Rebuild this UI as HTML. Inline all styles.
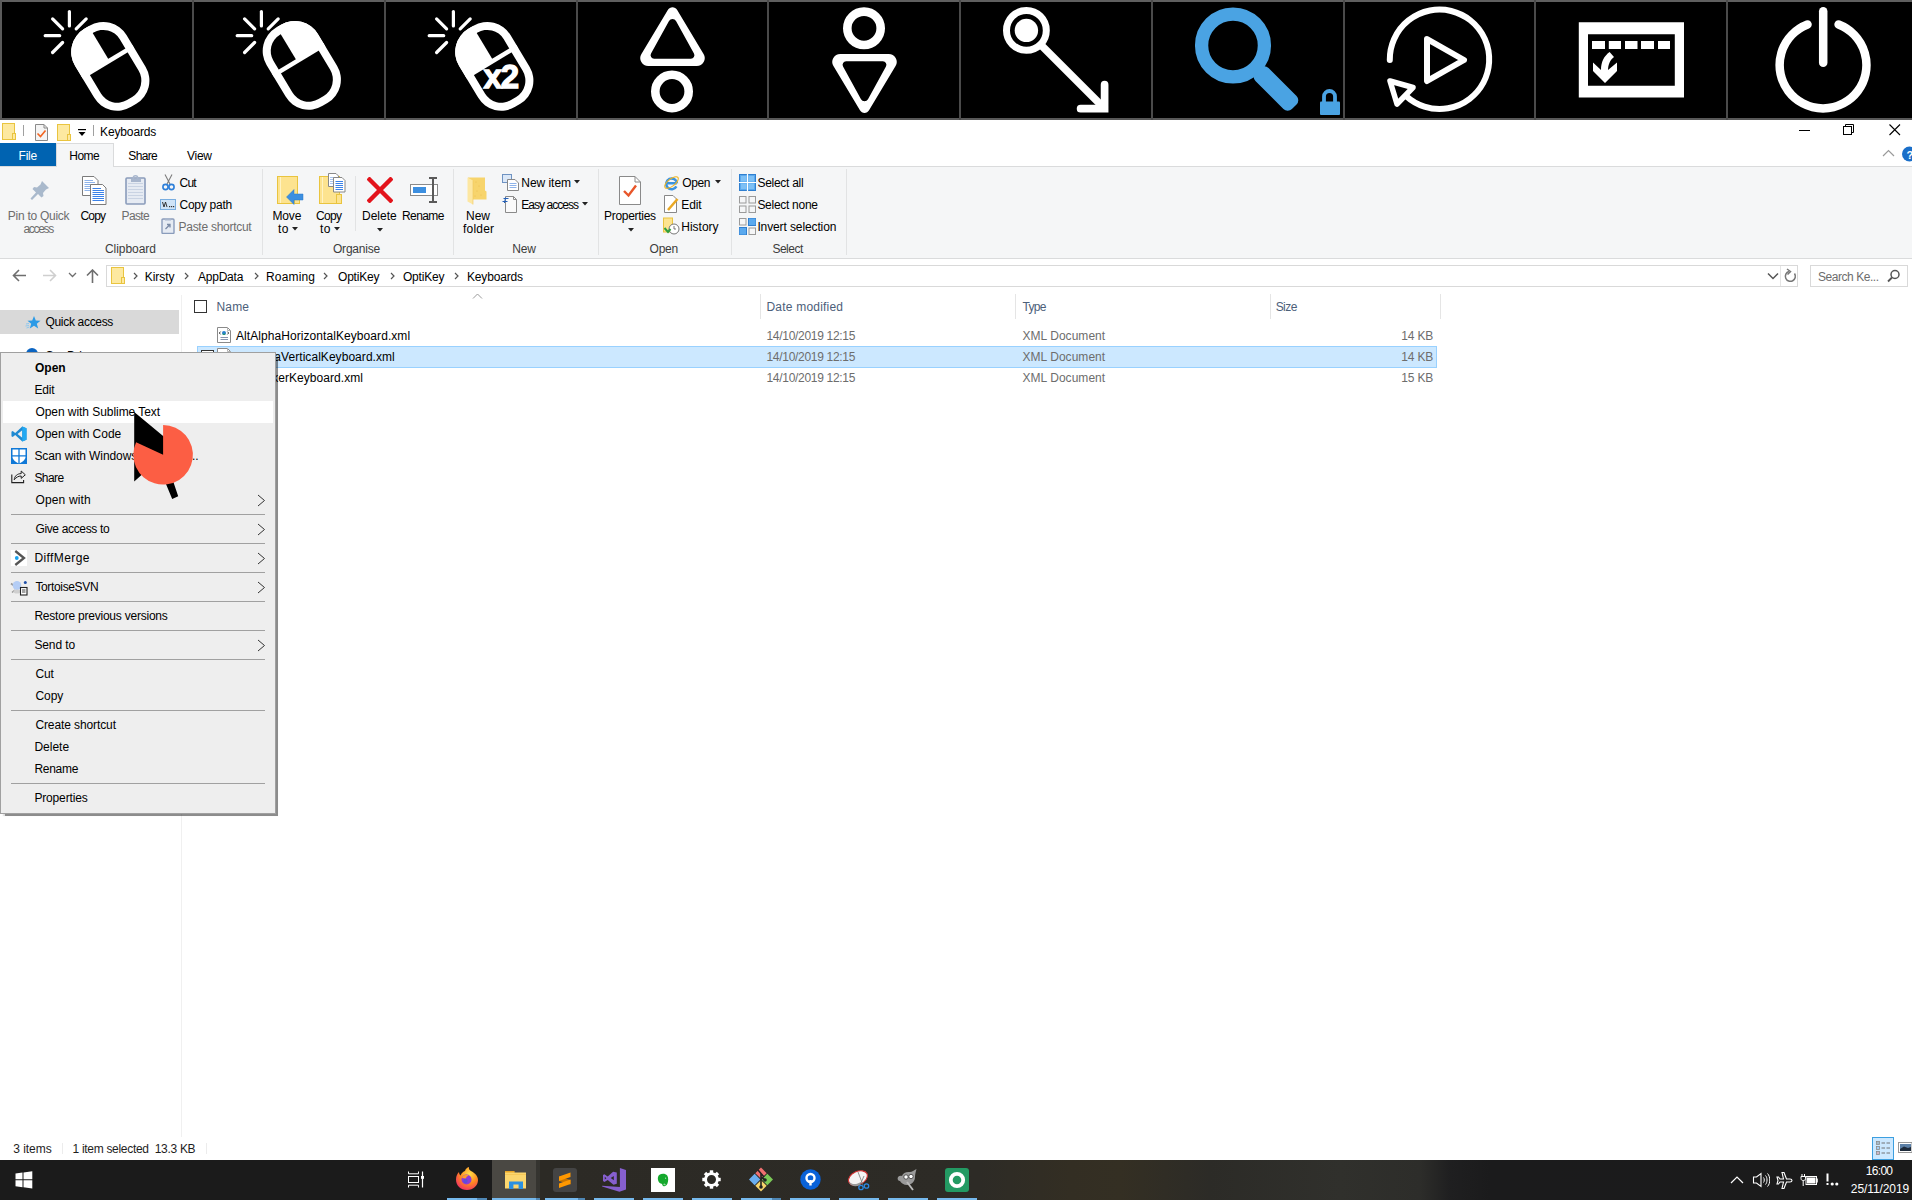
<!DOCTYPE html>
<html><head><meta charset="utf-8"><style>
*{margin:0;padding:0;box-sizing:border-box}
html,body{width:1912px;height:1200px;overflow:hidden;background:#fff;font-family:"Liberation Sans",sans-serif;font-size:12px;color:#000}
.a{position:absolute}
.t{position:absolute;white-space:nowrap;line-height:14px;letter-spacing:-0.15px}
#kb{position:absolute;left:0;top:0;width:1912px;height:120px;background:#000}
.sep{position:absolute;top:0;width:2px;height:120px;background:#4a4a4a}
</style></head><body>
<!-- OptiKey toolbar -->
<div id="kb">
 <div class="a" style="left:0;top:0;width:1912px;height:2px;background:#5f5f5f"></div>
 <div class="a" style="left:0;top:0;width:2px;height:120px;background:#5a5a5a"></div>
 <div class="a" style="left:0;top:118px;width:1912px;height:2px;background:#585858"></div>
 <div class="sep" style="left:192px"></div>
 <div class="sep" style="left:384px"></div>
 <div class="sep" style="left:576px"></div>
 <div class="sep" style="left:767px"></div>
 <div class="sep" style="left:959px"></div>
 <div class="sep" style="left:1151px"></div>
 <div class="sep" style="left:1343px"></div>
 <div class="sep" style="left:1534px"></div>
 <div class="sep" style="left:1726px"></div>
 <svg class="a" style="left:0;top:0" width="1912" height="120" viewBox="0 0 1912 120">
  <defs>
   <g id="rays" stroke="#fff" stroke-width="3.2" stroke-linecap="round">
    <line x1="69.4" y1="11.5" x2="69.4" y2="26"/>
    <line x1="45.2" y1="35.7" x2="59.7" y2="35.7"/>
    <line x1="52.6" y1="18.9" x2="62.6" y2="28.9"/>
    <line x1="86.2" y1="18.9" x2="76.2" y2="28.9"/>
    <line x1="62.6" y1="42.5" x2="52.6" y2="52.5"/>
   </g>
   <clipPath id="inner"><rect x="-30" y="-45.5" width="60" height="91" rx="27"/></clipPath>
  </defs>
  <!-- key 1: left click -->
  <use href="#rays"/>
  <g transform="translate(110.3,66.3) rotate(-31)">
   <rect x="-30" y="-45.5" width="60" height="91" rx="27" fill="#fff"/>
   <rect x="-22" y="-37.5" width="44" height="75" rx="19" fill="#000"/>
   <g clip-path="url(#inner)" fill="#fff">
    <rect x="-30" y="-46" width="32" height="42"/>
    <rect x="-30" y="-7.5" width="60" height="4.5"/>
   </g>
  </g>
  <!-- key 2: right click -->
  <g transform="translate(192,0)">
   <use href="#rays"/>
   <g transform="translate(109.8,65.3) rotate(-31)">
    <rect x="-30" y="-45.5" width="60" height="91" rx="27" fill="#fff"/>
    <rect x="-22" y="-37.5" width="44" height="75" rx="19" fill="#000"/>
    <g clip-path="url(#inner)" fill="#fff">
     <rect x="-2" y="-46" width="32" height="41"/>
     <rect x="-30" y="-8.3" width="60" height="4.5"/>
    </g>
   </g>
  </g>
  <!-- key 3: double click -->
  <g transform="translate(384,0)">
   <use href="#rays"/>
   <g transform="translate(110.3,66.3) rotate(-31)">
    <rect x="-30" y="-45.5" width="60" height="91" rx="27" fill="#fff"/>
    <rect x="-22" y="-37.5" width="44" height="75" rx="19" fill="#000"/>
    <g clip-path="url(#inner)" fill="#fff">
     <rect x="-30" y="-46" width="32" height="42"/>
     <rect x="-30" y="-7.5" width="60" height="4.5"/>
    </g>
   </g>
   <text x="99.5" y="88" font-family="Liberation Sans" font-weight="bold" font-size="33" fill="#fff" stroke="#fff" stroke-width="1.3" letter-spacing="-1.2">x2</text>
  </g>
  <!-- key 4 -->
  <path id="tri4" d="M667.96,9.77 L641.43,53.98 A8,8 0 0 0 648.29,66.10 L696.71,66.10 A8,8 0 0 0 703.57,53.98 L677.04,9.77 A5.3,5.3 0 0 0 667.96,9.77 Z M669.00,20.97 L651.04,53.61 A3.5,3.5 0 0 0 654.11,58.80 L690.89,58.80 A3.5,3.5 0 0 0 693.96,53.61 L676.00,20.97 A4,4 0 0 0 669.00,20.97 Z" fill="#fff" fill-rule="evenodd"/>
  <circle cx="672" cy="91.5" r="16.7" fill="none" stroke="#fff" stroke-width="8.6"/>
  <!-- key 5 -->
  <circle cx="864" cy="28.3" r="16.7" fill="none" stroke="#fff" stroke-width="8.6"/>
  <path d="M667.96,9.77 L641.43,53.98 A8,8 0 0 0 648.29,66.10 L696.71,66.10 A8,8 0 0 0 703.57,53.98 L677.04,9.77 A5.3,5.3 0 0 0 667.96,9.77 Z M669.00,20.97 L651.04,53.61 A3.5,3.5 0 0 0 654.11,58.80 L690.89,58.80 A3.5,3.5 0 0 0 693.96,53.61 L676.00,20.97 A4,4 0 0 0 669.00,20.97 Z" fill="#fff" fill-rule="evenodd" transform="translate(192,120.1) scale(1,-1)"/>
  <!-- key 6 -->
  <circle cx="1026.4" cy="30.4" r="19.9" fill="none" stroke="#fff" stroke-width="7"/>
  <circle cx="1026.4" cy="30.4" r="11.7" fill="#fff"/>
  <line x1="1042" y1="46" x2="1103" y2="107" stroke="#fff" stroke-width="7.5"/>
  <path d="M1080.6,108.7 L1104.6,108.7 L1104.6,84.7" fill="none" stroke="#fff" stroke-width="7.7" stroke-linecap="round" stroke-linejoin="miter"/>
  <!-- key 7 magnifier -->
  <circle cx="1233" cy="45.5" r="31.4" fill="none" stroke="#4aa3e3" stroke-width="13.3"/>
  <rect x="35" y="-9.25" width="51.6" height="18.5" rx="6" fill="#4aa3e3" transform="translate(1233,45.5) rotate(45)"/>
  <path d="M1324,102 V96.5 a5.5,5.5 0 0 1 11,0 V102" fill="none" stroke="#4aa3e3" stroke-width="3.8"/>
  <rect x="1320" y="101.5" width="20" height="13.5" rx="1" fill="#4aa3e3"/>
  <!-- key 8 -->
  <path d="M1389.8,60 A49.7,49.7 0 1 1 1406,96" fill="none" stroke="#fff" stroke-width="6" stroke-linecap="round"/>
  <path d="M1390,81 L1413,87.5 L1397,104 Z" fill="none" stroke="#fff" stroke-width="5.5" stroke-linejoin="round"/>
  <path d="M1427,39 L1464,60 L1427,81 Z" fill="none" stroke="#fff" stroke-width="6" stroke-linejoin="round"/>
  <!-- key 9 -->
  <path d="M1578.8,22.3 H1684 V97.5 H1578.8 Z M1588,34.2 V85.8 H1674.8 V34.2 Z" fill="#fff" fill-rule="evenodd"/>
  <g fill="#fff">
   <rect x="1592" y="41" width="13" height="8"/>
   <rect x="1608.8" y="41" width="12.2" height="8"/>
   <rect x="1625" y="41" width="12.5" height="8"/>
   <rect x="1641" y="41" width="13" height="8"/>
   <rect x="1658" y="41" width="12" height="8"/>
   <path d="M1593,62.5 L1601,70 C1601,62 1604,56 1609.6,52 L1614,57 C1610,60 1608,65 1608,70 L1617,62.5 L1617,71 L1605,83 L1593,71 Z"/>
  </g>
  <!-- key 10 power -->
  <path d="M1807.5,24.5 A43.4,43.4 0 1 0 1838.6,24.5" fill="none" stroke="#fff" stroke-width="8.5" stroke-linecap="round"/>
  <line x1="1823.2" y1="11.2" x2="1823.2" y2="62.8" stroke="#fff" stroke-width="8.5" stroke-linecap="round"/>
 </svg>
</div>


<svg class="a" style="left:2px;top:123px;" width="14" height="17" viewBox="0 0 14 17"><rect x="0.5" y="0.5" width="12" height="16" fill="#fde9a0" stroke="#e9c43f"/><rect x="10.5" y="10.5" width="3" height="6" fill="#fde9a0" stroke="#e9c43f"/></svg>
<div class="a" style="left:23px;top:125px;width:1px;height:11px;background:#a0a0a0;"></div>
<svg class="a" style="left:35px;top:124px;" width="13" height="17" viewBox="0 0 13 17"><path d="M0.5,0.5 H9 L12.5,4 V16.5 H0.5 Z" fill="#f4f4f4" stroke="#8a8a8a"/><path d="M9,0.5 V4 H12.5" fill="none" stroke="#8a8a8a"/><path d="M2.5,9.5 L5.5,12.5 L10.5,6.5" fill="none" stroke="#f26522" stroke-width="1.6"/></svg>
<svg class="a" style="left:57px;top:124px;" width="14" height="17" viewBox="0 0 14 17"><rect x="0.5" y="0.5" width="12" height="16" fill="#fde9a0" stroke="#e9c43f"/><rect x="10.5" y="10.5" width="3" height="6" fill="#fde9a0" stroke="#e9c43f"/></svg>
<svg class="a" style="left:78px;top:129px;" width="8" height="8" viewBox="0 0 8 8"><rect x="0" y="0" width="8" height="1.2" fill="#000"/><path d="M0.5,3 H7.5 L4,7 Z" fill="#000"/></svg>
<div class="a" style="left:93px;top:125px;width:1px;height:11px;background:#a0a0a0;"></div>
<div class="t" style="left:100px;top:124.84px;letter-spacing:-0.125px;">Keyboards</div>
<div class="a" style="left:1799px;top:130px;width:11px;height:1px;background:#000;"></div>
<svg class="a" style="left:1843px;top:124px;" width="12" height="12" viewBox="0 0 12 12"><rect x="0.5" y="2.5" width="8" height="8" fill="none" stroke="#000"/><path d="M2.5,2.5 V0.5 H10.5 V8.5 H8.5" fill="none" stroke="#000"/></svg>
<svg class="a" style="left:1889px;top:124px;" width="12" height="12" viewBox="0 0 12 12"><path d="M0.5,0.5 L11,11 M11,0.5 L0.5,11" stroke="#000" stroke-width="1.1"/></svg>
<div class="a" style="left:0px;top:143px;width:56px;height:23px;background:#0063b1;"></div>
<div class="t" style="left:18.6px;top:148.84px;color:#fff;letter-spacing:-0.233px;">File</div>
<div class="a" style="left:56px;top:143px;width:58px;height:24px;background:#f5f6f7;border:1px solid #dadbdc;border-bottom:none;z-index:2"></div>
<div class="t" style="left:69.3px;top:148.84px;letter-spacing:-0.533px;z-index:3">Home</div>
<div class="t" style="left:128.3px;top:148.84px;letter-spacing:-0.650px;">Share</div>
<div class="t" style="left:187px;top:148.84px;letter-spacing:-0.267px;">View</div>
<svg class="a" style="left:1882px;top:149px;" width="13" height="8" viewBox="0 0 13 8"><path d="M1,7 L6.5,1.5 L12,7" fill="none" stroke="#9a9a9a" stroke-width="1.2"/></svg>
<svg class="a" style="left:1901px;top:146px;" width="11" height="16" viewBox="0 0 11 16"><circle cx="8.5" cy="8" r="7.5" fill="#1a6fc9"/><text x="5.5" y="12.5" font-family="Liberation Sans" font-weight="bold" font-size="11" fill="#fff">?</text></svg>
<div class="a" style="left:0px;top:166px;width:1912px;height:93px;background:#f5f6f7;border-top:1px solid #dadbdc;border-bottom:1px solid #dadbdc"></div>
<div class="a" style="left:262px;top:169px;width:1px;height:86px;background:#e2e3e4;"></div>
<div class="a" style="left:453px;top:169px;width:1px;height:86px;background:#e2e3e4;"></div>
<div class="a" style="left:598px;top:169px;width:1px;height:86px;background:#e2e3e4;"></div>
<div class="a" style="left:731px;top:169px;width:1px;height:86px;background:#e2e3e4;"></div>
<div class="a" style="left:846px;top:169px;width:1px;height:86px;background:#e2e3e4;"></div>
<div class="a" style="left:355px;top:176px;width:1px;height:55px;background:#e2e3e4;"></div>
<svg class="a" style="left:29px;top:180px;" width="21" height="21" viewBox="0 0 21 21"><path d="M13,1 L20,8 L17,9.5 L14,13 L14.5,16 L12.5,17.5 L9,14 L3,20 L1.5,18.5 L7,12.5 L3.5,9 L5,7 L8,7.5 L11.5,4.5 Z" fill="#a9b9cc"/></svg>
<div class="t" style="left:7.800000000000001px;top:208.84px;color:#6d6d6d;letter-spacing:-0.264px;">Pin to Quick</div>
<div class="t" style="left:23.4px;top:221.84px;color:#6d6d6d;letter-spacing:-1.280px;">access</div>
<svg class="a" style="left:82px;top:176px;" width="25" height="29" viewBox="0 0 25 29"><path d="M0.5,0.5 H12 L16,4.5 V19.5 H0.5 Z" fill="#fff" stroke="#7b7b7b"/><g stroke="#8fb4ea" stroke-width="1"><line x1="2.5" y1="4.5" x2="11" y2="4.5"/><line x1="2.5" y1="6.5" x2="13" y2="6.5"/><line x1="2.5" y1="8.5" x2="13" y2="8.5"/><line x1="2.5" y1="10.5" x2="13" y2="10.5"/><line x1="2.5" y1="12.5" x2="13" y2="12.5"/><line x1="2.5" y1="14.5" x2="13" y2="14.5"/></g><path d="M8.5,8.5 H20.5 L24,12 V28.5 H8.5 Z" fill="#fff" stroke="#7b7b7b"/><g stroke="#3b82e8" stroke-width="1"><line x1="10.5" y1="12.5" x2="19" y2="12.5"/><line x1="10.5" y1="14.5" x2="22" y2="14.5"/><line x1="10.5" y1="16.5" x2="22" y2="16.5"/><line x1="10.5" y1="18.5" x2="22" y2="18.5"/><line x1="10.5" y1="20.5" x2="22" y2="20.5"/><line x1="10.5" y1="22.5" x2="22" y2="22.5"/><line x1="10.5" y1="24.5" x2="22" y2="24.5"/></g></svg>
<div class="t" style="left:80.5px;top:208.84px;letter-spacing:-0.833px;">Copy</div>
<svg class="a" style="left:125px;top:175px;" width="22" height="30" viewBox="0 0 22 30"><rect x="1" y="3" width="19" height="26" rx="1" fill="#e6ebf3" stroke="#8a9cbb" stroke-width="1.6"/><g stroke="#c9d3e3"><line x1="3" y1="8.5" x2="18" y2="8.5"/><line x1="3" y1="11.5" x2="18" y2="11.5"/><line x1="3" y1="14.5" x2="18" y2="14.5"/><line x1="3" y1="17.5" x2="18" y2="17.5"/><line x1="3" y1="20.5" x2="18" y2="20.5"/><line x1="3" y1="23.5" x2="18" y2="23.5"/></g><rect x="6" y="4" width="10" height="3" fill="#a8b6cd"/><circle cx="10.5" cy="3" r="2.2" fill="none" stroke="#a8b6cd" stroke-width="1.5"/></svg>
<div class="t" style="left:121.6px;top:208.84px;color:#6d6d6d;letter-spacing:-0.650px;">Paste</div>
<svg class="a" style="left:162px;top:174px;" width="13" height="17" viewBox="0 0 13 17"><path d="M3,0.5 L8,10 M10,0.5 L5,10" stroke="#7d7d7d" stroke-width="1.1"/><circle cx="3.5" cy="13" r="2.6" fill="none" stroke="#2d7fd9" stroke-width="1.6"/><circle cx="9.5" cy="13" r="2.6" fill="none" stroke="#2d7fd9" stroke-width="1.6"/></svg>
<div class="t" style="left:179.5px;top:175.84px;letter-spacing:-0.750px;">Cut</div>
<svg class="a" style="left:160px;top:199px;" width="16" height="11" viewBox="0 0 16 11"><rect x="0.5" y="0.5" width="15" height="10" fill="#cfe3f7" stroke="#7aaee0"/><path d="M2.5,3 L4,8 L5.5,3 L7,8" fill="none" stroke="#222" stroke-width="0.9"/><g fill="#333"><rect x="9" y="7" width="1.2" height="1.2"/><rect x="11" y="7" width="1.2" height="1.2"/><rect x="13" y="7" width="1.2" height="1.2"/></g></svg>
<div class="t" style="left:179.5px;top:197.84px;letter-spacing:-0.250px;">Copy path</div>
<svg class="a" style="left:161px;top:217px;" width="14" height="17" viewBox="0 0 14 17"><rect x="1" y="2" width="12" height="14.5" rx="1" fill="#e6ebf3" stroke="#8a9cbb" stroke-width="1.4"/><rect x="4" y="1" width="6" height="2.5" fill="#a8b6cd"/><path d="M4.5,12 L9,7.5 M6,7.5 H9 V10.5" fill="none" stroke="#7a8aa5" stroke-width="1.3"/></svg>
<div class="t" style="left:178.5px;top:219.84px;color:#6d6d6d;letter-spacing:-0.269px;">Paste shortcut</div>
<div class="t" style="left:105px;top:241.84px;color:#3c3c3c;letter-spacing:-0.050px;">Clipboard</div>
<svg class="a" style="left:277px;top:176px;" width="24" height="29" viewBox="0 0 24 29"><rect x="0.5" y="0.5" width="20" height="27" fill="#fde38f" stroke="#e9c43f"/><line x1="3.5" y1="1" x2="3.5" y2="27" stroke="#fff3c4"/><rect x="17.5" y="18.5" width="5" height="9" fill="#fde38f" stroke="#e9c43f"/></svg>
<svg class="a" style="left:286px;top:189px;" width="18" height="17" viewBox="0 0 18 17"><path d="M0.5,8 L8,0.5 V5 H17 V11 H8 V15.5 Z" fill="#3c8fe0" stroke="#2a78c9" stroke-width="0.5"/></svg>
<div class="t" style="left:272.5px;top:208.84px;letter-spacing:-0.167px;">Move</div>
<div class="t" style="left:278px;top:221.84px;letter-spacing:0.500px;">to</div>
<svg class="a" style="left:292px;top:227px;" width="6" height="4" viewBox="0 0 6 4"><path d="M0,0 H6 L3,3.5 Z" fill="#222"/></svg>
<svg class="a" style="left:319px;top:176px;" width="24" height="29" viewBox="0 0 24 29"><rect x="0.5" y="0.5" width="20" height="27" fill="#fde38f" stroke="#e9c43f"/><line x1="3.5" y1="1" x2="3.5" y2="27" stroke="#fff3c4"/><rect x="17.5" y="18.5" width="5" height="9" fill="#fde38f" stroke="#e9c43f"/></svg>
<svg class="a" style="left:328px;top:173px;" width="18" height="20" viewBox="0 0 18 20"><path d="M0.5,0.5 H8 L10.5,3 V13.5 H0.5 Z" fill="#fff" stroke="#888"/><g stroke="#a9c5ef"><line x1="2" y1="4.5" x2="9" y2="4.5"/><line x1="2" y1="6.5" x2="9" y2="6.5"/><line x1="2" y1="8.5" x2="9" y2="8.5"/><line x1="2" y1="10.5" x2="9" y2="10.5"/></g><path d="M5.5,4.5 H14 L17,7.5 V19 H5.5 Z" fill="#fff" stroke="#888"/><g stroke="#3b82e8"><line x1="7.5" y1="8.5" x2="15" y2="8.5"/><line x1="7.5" y1="10.5" x2="15" y2="10.5"/><line x1="7.5" y1="12.5" x2="15" y2="12.5"/><line x1="7.5" y1="14.5" x2="15" y2="14.5"/><line x1="7.5" y1="16.5" x2="15" y2="16.5"/></g></svg>
<div class="t" style="left:316px;top:208.84px;letter-spacing:-0.667px;">Copy</div>
<div class="t" style="left:320px;top:221.84px;letter-spacing:0.500px;">to</div>
<svg class="a" style="left:334px;top:227px;" width="6" height="4" viewBox="0 0 6 4"><path d="M0,0 H6 L3,3.5 Z" fill="#222"/></svg>
<svg class="a" style="left:367px;top:177px;" width="26" height="26" viewBox="0 0 26 26"><path d="M2.5,2.5 L23.5,23.5 M23.5,2.5 L2.5,23.5" stroke="#e3131b" stroke-width="4.4" stroke-linecap="square"/></svg>
<div class="t" style="left:362px;top:208.84px;letter-spacing:0.000px;">Delete</div>
<svg class="a" style="left:377px;top:228px;" width="6" height="4" viewBox="0 0 6 4"><path d="M0,0 H6 L3,3.5 Z" fill="#222"/></svg>
<svg class="a" style="left:410px;top:177px;" width="29" height="27" viewBox="0 0 29 27"><rect x="0.5" y="7.5" width="27" height="11" fill="#fff" stroke="#8a8a8a"/><rect x="3" y="10" width="13" height="6" fill="#3c8fe0"/><path d="M19,1 H27 M23,1 V25 M19,25 H27" fill="none" stroke="#5a5a5a" stroke-width="2"/></svg>
<div class="t" style="left:402px;top:208.84px;letter-spacing:-0.600px;">Rename</div>
<div class="t" style="left:333px;top:241.84px;color:#3c3c3c;letter-spacing:-0.214px;">Organise</div>
<svg class="a" style="left:467px;top:177px;" width="21" height="29" viewBox="0 0 21 29"><path d="M1,0.5 H18 V13.5 L19.5,14.5 V22.5 H1 Z" fill="#f7d46c"/><g fill="#e9b94a"><circle cx="9" cy="5" r="0.5"/><circle cx="12" cy="9" r="0.5"/><circle cx="10" cy="14" r="0.5"/><circle cx="14" cy="18" r="0.5"/><circle cx="8" cy="19" r="0.5"/></g><path d="M0.5,0.5 L6,3.5 V27.5 L0.5,24.5 Z" fill="#fde7a2"/><path d="M6,3.5 V27.5" stroke="#f0c85a" stroke-width="0.6"/></svg>
<div class="t" style="left:466px;top:208.84px;letter-spacing:0.000px;">New</div>
<div class="t" style="left:463px;top:221.84px;letter-spacing:0.200px;">folder</div>
<svg class="a" style="left:502px;top:174px;" width="18" height="17" viewBox="0 0 18 17"><rect x="0.5" y="0.5" width="9" height="8" fill="#dbe8f8" stroke="#6f93c2"/><path d="M5.5,5.5 H13 L16.5,9 V16.5 H5.5 Z" fill="#fff" stroke="#888"/><g stroke="#8fb4ea"><line x1="7.5" y1="9.5" x2="14.5" y2="9.5"/><line x1="7.5" y1="11.5" x2="14.5" y2="11.5"/><line x1="7.5" y1="13.5" x2="14.5" y2="13.5"/></g></svg>
<div class="t" style="left:521.3px;top:175.84px;letter-spacing:-0.043px;">New item</div>
<svg class="a" style="left:574px;top:180px;" width="6" height="4" viewBox="0 0 6 4"><path d="M0,0 H6 L3,3.5 Z" fill="#222"/></svg>
<svg class="a" style="left:502px;top:195px;" width="17" height="18" viewBox="0 0 17 18"><path d="M3.5,1.5 H11.5 L14.5,4.5 V17.5 H3.5 Z" fill="#fafafa" stroke="#8a8a8a"/><path d="M11.5,1.5 V4.5 H14.5" fill="none" stroke="#8a8a8a"/><path d="M1.5,3.5 H6.5 M0.5,6.5 H5.5" stroke="#2460b8" stroke-width="1.1"/><path d="M3.6,2.5 L2.4,8" stroke="#2460b8" stroke-width="1"/></svg>
<div class="t" style="left:521.3px;top:197.84px;letter-spacing:-0.970px;">Easy access</div>
<svg class="a" style="left:582px;top:202px;" width="6" height="4" viewBox="0 0 6 4"><path d="M0,0 H6 L3,3.5 Z" fill="#222"/></svg>
<div class="t" style="left:512.3px;top:241.84px;color:#3c3c3c;letter-spacing:-0.150px;">New</div>
<svg class="a" style="left:619px;top:176px;" width="23" height="29" viewBox="0 0 23 29"><path d="M0.5,0.5 H16 L21.5,6 V28.5 H0.5 Z" fill="#fff" stroke="#8a8a8a"/><path d="M16,0.5 V6 H21.5" fill="none" stroke="#8a8a8a"/><path d="M5,15 L9.5,19.5 L17,9.5" fill="none" stroke="#e8562a" stroke-width="2.4"/></svg>
<div class="t" style="left:604px;top:208.84px;letter-spacing:-0.289px;">Properties</div>
<svg class="a" style="left:628px;top:228px;" width="6" height="4" viewBox="0 0 6 4"><path d="M0,0 H6 L3,3.5 Z" fill="#222"/></svg>
<svg class="a" style="left:663px;top:174px;" width="17" height="17" viewBox="0 0 17 17"><path d="M13.8,9.3 H3.6 M13.4,12.4 A5.4,5.4 0 1 1 14,9.3" fill="none" stroke="#3a93e0" stroke-width="2.5"/><ellipse cx="8.5" cy="8.5" rx="8.2" ry="3.6" transform="rotate(-38 8.5 8.5)" fill="none" stroke="#f2b51c" stroke-width="1.1"/></svg>
<div class="t" style="left:682.3px;top:175.84px;letter-spacing:-0.433px;">Open</div>
<svg class="a" style="left:715px;top:180px;" width="6" height="4" viewBox="0 0 6 4"><path d="M0,0 H6 L3,3.5 Z" fill="#222"/></svg>
<svg class="a" style="left:664px;top:195px;" width="15" height="18" viewBox="0 0 15 18"><path d="M0.5,0.5 H9 L12.5,4 V17.5 H0.5 Z" fill="#fff" stroke="#888"/><path d="M4,15 L13.5,4" stroke="#e9a824" stroke-width="2.5"/></svg>
<div class="t" style="left:681.3px;top:197.84px;letter-spacing:-0.133px;">Edit</div>
<svg class="a" style="left:663px;top:217px;" width="17" height="18" viewBox="0 0 17 18"><rect x="0.5" y="1" width="9" height="14" fill="#fde38f" stroke="#e9c43f"/><circle cx="11" cy="12" r="5" fill="#fff" stroke="#777"/><path d="M11,9 V12 H13" fill="none" stroke="#555" stroke-width="0.8"/><path d="M1.5,11 L5,15 L7.5,12" fill="none" stroke="#2f9e3c" stroke-width="2"/></svg>
<div class="t" style="left:681.3px;top:219.84px;letter-spacing:-0.017px;">History</div>
<div class="t" style="left:649.6px;top:241.84px;color:#3c3c3c;letter-spacing:-0.267px;">Open</div>
<svg class="a" style="left:739px;top:174px;" width="17" height="17" viewBox="0 0 17 17"><rect x="0.5" y="0.5" width="16" height="16" fill="#5aa9ee" stroke="#2f7fd0"/><path d="M8.5,0 V17 M0,8.5 H17" stroke="#fff" stroke-width="1.2"/><rect x="2" y="2" width="5.5" height="5.5" fill="#7ec0f5"/><rect x="9.5" y="2" width="5.5" height="5.5" fill="#7ec0f5"/><rect x="2" y="9.5" width="5.5" height="5.5" fill="#7ec0f5"/><rect x="9.5" y="9.5" width="5.5" height="5.5" fill="#7ec0f5"/></svg>
<div class="t" style="left:757.4px;top:175.84px;letter-spacing:-0.267px;">Select all</div>
<svg class="a" style="left:739px;top:196px;" width="17" height="17" viewBox="0 0 17 17"><g fill="none" stroke="#9a9a9a"><rect x="0.5" y="0.5" width="6.5" height="6.5"/><rect x="10" y="0.5" width="6.5" height="6.5"/><rect x="0.5" y="10" width="6.5" height="6.5"/><rect x="10" y="10" width="6.5" height="6.5"/></g></svg>
<div class="t" style="left:757.4px;top:197.84px;letter-spacing:-0.280px;">Select none</div>
<svg class="a" style="left:739px;top:218px;" width="17" height="17" viewBox="0 0 17 17"><g fill="none" stroke="#9a9a9a"><rect x="0.5" y="0.5" width="6.5" height="6.5"/><rect x="10" y="10" width="6.5" height="6.5"/></g><rect x="9.5" y="0" width="7.5" height="7.5" fill="#5aa9ee" stroke="#2f7fd0"/><rect x="0" y="9.5" width="7.5" height="7.5" fill="#5aa9ee" stroke="#2f7fd0"/></svg>
<div class="t" style="left:757.4px;top:219.84px;letter-spacing:-0.113px;">Invert selection</div>
<div class="t" style="left:772.4px;top:241.84px;color:#3c3c3c;letter-spacing:-0.480px;">Select</div>
<svg class="a" style="left:12px;top:269px;" width="15" height="14" viewBox="0 0 15 14"><path d="M7,1 L1.5,6.5 L7,12 M1.5,6.5 H14" fill="none" stroke="#6e6e6e" stroke-width="1.6"/></svg>
<svg class="a" style="left:42px;top:269px;" width="15" height="14" viewBox="0 0 15 14"><path d="M8,1 L13.5,6.5 L8,12 M13.5,6.5 H1" fill="none" stroke="#cfcfcf" stroke-width="1.6"/></svg>
<svg class="a" style="left:68px;top:272px;" width="9" height="6" viewBox="0 0 9 6"><path d="M1,1 L4.5,4.5 L8,1" fill="none" stroke="#6e6e6e" stroke-width="1.3"/></svg>
<svg class="a" style="left:86px;top:269px;" width="13" height="14" viewBox="0 0 13 14"><path d="M1,6.5 L6.5,1 L12,6.5 M6.5,1 V14" fill="none" stroke="#6e6e6e" stroke-width="1.6"/></svg>
<div class="a" style="left:106px;top:265px;width:1692px;height:22px;border:1px solid #d9d9d9;background:#fff"></div>
<div class="a" style="left:1780px;top:266px;width:1px;height:20px;background:#e5e5e5;"></div>
<svg class="a" style="left:111px;top:267px;" width="14" height="17" viewBox="0 0 14 17"><rect x="0.5" y="0.5" width="12" height="16" fill="#fde9a0" stroke="#e9c43f"/><rect x="10.5" y="10.5" width="3" height="6" fill="#fde9a0" stroke="#e9c43f"/></svg>
<svg class="a" style="left:133px;top:272px;" width="5" height="8" viewBox="0 0 5 8"><path d="M1,1 L4,4 L1,7" fill="none" stroke="#555" stroke-width="1.2"/></svg>
<svg class="a" style="left:184px;top:272px;" width="5" height="8" viewBox="0 0 5 8"><path d="M1,1 L4,4 L1,7" fill="none" stroke="#555" stroke-width="1.2"/></svg>
<svg class="a" style="left:254px;top:272px;" width="5" height="8" viewBox="0 0 5 8"><path d="M1,1 L4,4 L1,7" fill="none" stroke="#555" stroke-width="1.2"/></svg>
<svg class="a" style="left:323px;top:272px;" width="5" height="8" viewBox="0 0 5 8"><path d="M1,1 L4,4 L1,7" fill="none" stroke="#555" stroke-width="1.2"/></svg>
<svg class="a" style="left:390px;top:272px;" width="5" height="8" viewBox="0 0 5 8"><path d="M1,1 L4,4 L1,7" fill="none" stroke="#555" stroke-width="1.2"/></svg>
<svg class="a" style="left:454px;top:272px;" width="5" height="8" viewBox="0 0 5 8"><path d="M1,1 L4,4 L1,7" fill="none" stroke="#555" stroke-width="1.2"/></svg>
<div class="t" style="left:144.7px;top:269.84px;letter-spacing:-0.020px;">Kirsty</div>
<div class="t" style="left:198px;top:269.84px;letter-spacing:-0.233px;">AppData</div>
<div class="t" style="left:266px;top:269.84px;letter-spacing:0.167px;">Roaming</div>
<div class="t" style="left:338px;top:269.84px;letter-spacing:-0.200px;">OptiKey</div>
<div class="t" style="left:403px;top:269.84px;letter-spacing:-0.217px;">OptiKey</div>
<div class="t" style="left:467px;top:269.84px;letter-spacing:-0.162px;">Keyboards</div>
<svg class="a" style="left:1767px;top:272px;" width="12" height="8" viewBox="0 0 12 8"><path d="M1,1.5 L6,6.5 L11,1.5" fill="none" stroke="#555" stroke-width="1.5"/></svg>
<svg class="a" style="left:1784px;top:268px;" width="13" height="16" viewBox="0 0 13 16"><path d="M10.5,5.5 A5,5 0 1 1 5,3.5" fill="none" stroke="#777" stroke-width="1.5"/><path d="M3,1 L6.5,3.5 L3.5,6.5" fill="none" stroke="#777" stroke-width="1.5"/></svg>
<div class="a" style="left:1810px;top:265px;width:98px;height:22px;border:1px solid #d9d9d9;background:#fff"></div>
<div class="t" style="left:1818px;top:269.84px;color:#6d6d6d;letter-spacing:-0.455px;">Search Ke...</div>
<svg class="a" style="left:1887px;top:269px;" width="13" height="14" viewBox="0 0 13 14"><circle cx="8" cy="5.5" r="4" fill="none" stroke="#555" stroke-width="1.5"/><path d="M5,8.5 L1,12.5" stroke="#555" stroke-width="1.8"/></svg>
<div class="a" style="left:181px;top:295px;width:1px;height:842px;background:#f0f0f0;"></div>
<div class="a" style="left:0px;top:310px;width:179px;height:24px;background:#d9d9d9;"></div>
<svg class="a" style="left:25px;top:315px;" width="16" height="15" viewBox="0 0 16 15"><path d="M9,1 L10.8,5.6 L15.5,5.8 L11.8,8.8 L13.2,13.5 L9,10.8 L4.8,13.5 L6.2,8.8 L2.5,5.8 L7.2,5.6 Z" fill="#2b9ae6"/><path d="M1,9 L4,8.5 M0.5,11 L4,10.5 M1.5,13 L4.5,12" stroke="#7cc3f2" stroke-width="0.8"/></svg>
<div class="t" style="left:45.5px;top:314.84px;letter-spacing:-0.318px;">Quick access</div>
<svg class="a" style="left:25px;top:347px;" width="14" height="8" viewBox="0 0 14 8"><ellipse cx="7" cy="7" rx="6" ry="6" fill="#0a64c2"/></svg>
<div class="t" style="left:45px;top:348.84px;letter-spacing:-0.200px;">OneDrive</div>
<div class="a" style="left:194px;top:300px;width:13px;height:13px;border:1px solid #333;background:#fff"></div>
<div class="t" style="left:216.5px;top:299.84px;color:#4c607a;letter-spacing:0.167px;">Name</div>
<svg class="a" style="left:472px;top:293px;" width="11" height="6" viewBox="0 0 11 6"><path d="M1,5.5 L5.5,1 L10,5.5" fill="none" stroke="#9a9a9a" stroke-width="1"/></svg>
<div class="a" style="left:760px;top:294px;width:1px;height:25px;background:#e5e5e5;"></div>
<div class="a" style="left:1015px;top:294px;width:1px;height:25px;background:#e5e5e5;"></div>
<div class="a" style="left:1270px;top:294px;width:1px;height:25px;background:#e5e5e5;"></div>
<div class="a" style="left:1440px;top:294px;width:1px;height:25px;background:#e5e5e5;"></div>
<div class="t" style="left:766.5px;top:299.84px;color:#4c607a;letter-spacing:0.208px;">Date modified</div>
<div class="t" style="left:1022.5px;top:299.84px;color:#4c607a;letter-spacing:-0.700px;">Type</div>
<div class="t" style="left:1275.7px;top:299.84px;color:#4c607a;letter-spacing:-0.567px;">Size</div>
<div class="a" style="left:197px;top:346px;width:1240px;height:22px;background:#cce8ff;border:1px solid #99d1ff"></div>
<div class="a" style="left:201px;top:350px;width:13px;height:13px;border:1px solid #333;background:#fff"></div>
<svg class="a" style="left:217px;top:327px;" width="14" height="16" viewBox="0 0 14 16"><path d="M0.5,0.5 H10.5 L13.5,3.5 V15.5 H0.5 Z" fill="#fff" stroke="#8a8a8a"/><path d="M10.5,0.5 V3.5 H13.5" fill="none" stroke="#b5b5b5"/><path d="M3.6,4.6 L2.3,6 L3.6,7.4 M10.4,4.6 L11.7,6 L10.4,7.4" fill="none" stroke="#3a3a3a" stroke-width="1"/><circle cx="7" cy="6" r="2" fill="#2a7fd0"/><path d="M5.2,6.8 A2,2 0 0 0 8.8,6.8 Z" fill="#1f9a55"/><path d="M3.5,10.5 H11 M3.5,12.5 H11" stroke="#8793ad" stroke-width="1"/></svg>
<svg class="a" style="left:217px;top:348px;" width="14" height="16" viewBox="0 0 14 16"><path d="M0.5,0.5 H10.5 L13.5,3.5 V15.5 H0.5 Z" fill="#fff" stroke="#8a8a8a"/><path d="M10.5,0.5 V3.5 H13.5" fill="none" stroke="#b5b5b5"/><path d="M3.6,4.6 L2.3,6 L3.6,7.4 M10.4,4.6 L11.7,6 L10.4,7.4" fill="none" stroke="#3a3a3a" stroke-width="1"/><circle cx="7" cy="6" r="2" fill="#2a7fd0"/><path d="M5.2,6.8 A2,2 0 0 0 8.8,6.8 Z" fill="#1f9a55"/><path d="M3.5,10.5 H11 M3.5,12.5 H11" stroke="#8793ad" stroke-width="1"/></svg>
<svg class="a" style="left:217px;top:369px;" width="14" height="16" viewBox="0 0 14 16"><path d="M0.5,0.5 H10.5 L13.5,3.5 V15.5 H0.5 Z" fill="#fff" stroke="#8a8a8a"/><path d="M10.5,0.5 V3.5 H13.5" fill="none" stroke="#b5b5b5"/><path d="M3.6,4.6 L2.3,6 L3.6,7.4 M10.4,4.6 L11.7,6 L10.4,7.4" fill="none" stroke="#3a3a3a" stroke-width="1"/><circle cx="7" cy="6" r="2" fill="#2a7fd0"/><path d="M5.2,6.8 A2,2 0 0 0 8.8,6.8 Z" fill="#1f9a55"/><path d="M3.5,10.5 H11 M3.5,12.5 H11" stroke="#8793ad" stroke-width="1"/></svg>
<div class="t" style="left:236px;top:328.84px;letter-spacing:0.069px;">AltAlphaHorizontalKeyboard.xml</div>
<div class="t" style="left:236px;top:349.84px;letter-spacing:0.050px;">AltAlphaVerticalKeyboard.xml</div>
<div class="t" style="right:1549px;top:370.84px;letter-spacing:0.05px">AltAlphaSpeakerKeyboard.xml</div>
<div class="t" style="left:766.5px;top:328.84px;color:#6d6d6d;letter-spacing:-0.300px;">14/10/2019 12:15</div>
<div class="t" style="left:1022.5px;top:328.84px;color:#6d6d6d;letter-spacing:0.036px;">XML Document</div>
<div class="t" style="right:479px;top:328.84px;color:#6d6d6d;letter-spacing:-0.2px">14 KB</div>
<div class="t" style="left:766.5px;top:349.84px;color:#6d6d6d;letter-spacing:-0.300px;">14/10/2019 12:15</div>
<div class="t" style="left:1022.5px;top:349.84px;color:#6d6d6d;letter-spacing:0.036px;">XML Document</div>
<div class="t" style="right:479px;top:349.84px;color:#6d6d6d;letter-spacing:-0.2px">14 KB</div>
<div class="t" style="left:766.5px;top:370.84px;color:#6d6d6d;letter-spacing:-0.300px;">14/10/2019 12:15</div>
<div class="t" style="left:1022.5px;top:370.84px;color:#6d6d6d;letter-spacing:0.036px;">XML Document</div>
<div class="t" style="right:479px;top:370.84px;color:#6d6d6d;letter-spacing:-0.2px">15 KB</div>
<div class="t" style="left:13.2px;top:1141.84px;color:#1e1e1e;letter-spacing:-0.033px;">3 items</div>
<div class="a" style="left:62px;top:1143px;width:1px;height:11px;background:#ececec;"></div>
<div class="t" style="left:72.5px;top:1141.84px;color:#1e1e1e;letter-spacing:-0.304px;">1 item selected&nbsp; 13.3 KB</div>
<div class="a" style="left:206px;top:1143px;width:1px;height:11px;background:#ececec;"></div>
<div class="a" style="left:1872px;top:1137px;width:22px;height:23px;background:#cce8ff;border:1px solid #3c9fe0"></div>
<svg class="a" style="left:1876px;top:1141px;" width="15" height="15" viewBox="0 0 15 15"><g fill="none" stroke="#888" stroke-width="0.8"><rect x="0.5" y="0.5" width="3" height="3"/><rect x="0.5" y="5.5" width="3" height="3"/><rect x="0.5" y="10.5" width="3" height="3"/></g><rect x="1.5" y="1.5" width="1" height="1" fill="#333"/><rect x="1.5" y="6.5" width="1" height="1" fill="#2f7fe0"/><rect x="1.5" y="11.5" width="1" height="1" fill="#e02020"/><path d="M5.5,2 H9 M10.5,2 H14 M5.5,7 H9 M10.5,7 H14 M5.5,12 H9 M10.5,12 H14" stroke="#666" stroke-width="0.9"/></svg>
<svg class="a" style="left:1898px;top:1142px;" width="14" height="11" viewBox="0 0 14 11"><rect x="0.5" y="0.5" width="13.5" height="10" fill="#fff" stroke="#999"/><rect x="2" y="2" width="11" height="7" fill="#5b7fa6"/><path d="M2,7 L6,4.5 L10,6 L13,5 V9 H2 Z" fill="#1d2a3a"/></svg>
<div class="a" style="left:0px;top:352px;width:276px;height:462px;background:#eeeeee;border:1px solid #a0a0a0;box-shadow:2.5px 2.5px 1.5px -0.3px rgba(0,0,0,0.45)"></div>
<div class="a" style="left:3px;top:401px;width:270px;height:22px;background:#ffffff;"></div>
<div class="t" style="left:35px;top:360.84px;letter-spacing:0.000px;font-weight:bold;">Open</div>
<div class="t" style="left:34.4px;top:382.84px;letter-spacing:-0.133px;">Edit</div>
<div class="t" style="left:35.4px;top:404.84px;letter-spacing:-0.052px;">Open with Sublime Text</div>
<div class="t" style="left:35.4px;top:426.84px;letter-spacing:-0.015px;">Open with Code</div>
<div class="t" style="left:34.4px;top:448.84px;letter-spacing:-0.071px;">Scan with Windows Defender...</div>
<div class="t" style="left:34.4px;top:470.84px;letter-spacing:-0.575px;">Share</div>
<div class="t" style="left:35.4px;top:492.84px;letter-spacing:0.162px;">Open with</div>
<div class="t" style="left:35.4px;top:521.84px;letter-spacing:-0.346px;">Give access to</div>
<div class="t" style="left:34.4px;top:550.84px;letter-spacing:0.400px;">DiffMerge</div>
<div class="t" style="left:35.4px;top:579.84px;letter-spacing:-0.350px;">TortoiseSVN</div>
<div class="t" style="left:34.4px;top:608.84px;letter-spacing:-0.221px;">Restore previous versions</div>
<div class="t" style="left:34.4px;top:637.84px;letter-spacing:-0.100px;">Send to</div>
<div class="t" style="left:35.4px;top:666.84px;letter-spacing:-0.150px;">Cut</div>
<div class="t" style="left:35.4px;top:688.84px;letter-spacing:-0.033px;">Copy</div>
<div class="t" style="left:35.4px;top:717.84px;letter-spacing:-0.100px;">Create shortcut</div>
<div class="t" style="left:34.4px;top:739.84px;letter-spacing:0.000px;">Delete</div>
<div class="t" style="left:34.4px;top:761.84px;letter-spacing:-0.280px;">Rename</div>
<div class="t" style="left:34.4px;top:790.84px;letter-spacing:-0.156px;">Properties</div>
<div class="a" style="left:11px;top:514px;width:254px;height:1px;background:#a0a0a0;"></div>
<div class="a" style="left:11px;top:543px;width:254px;height:1px;background:#a0a0a0;"></div>
<div class="a" style="left:11px;top:572px;width:254px;height:1px;background:#a0a0a0;"></div>
<div class="a" style="left:11px;top:601px;width:254px;height:1px;background:#a0a0a0;"></div>
<div class="a" style="left:11px;top:630px;width:254px;height:1px;background:#a0a0a0;"></div>
<div class="a" style="left:11px;top:659px;width:254px;height:1px;background:#a0a0a0;"></div>
<div class="a" style="left:11px;top:710px;width:254px;height:1px;background:#a0a0a0;"></div>
<div class="a" style="left:11px;top:783px;width:254px;height:1px;background:#a0a0a0;"></div>
<svg class="a" style="left:257px;top:494px;" width="9" height="13" viewBox="0 0 9 13"><path d="M1,1 L7.5,6.5 L1,12" fill="none" stroke="#333" stroke-width="1"/></svg>
<svg class="a" style="left:257px;top:523px;" width="9" height="13" viewBox="0 0 9 13"><path d="M1,1 L7.5,6.5 L1,12" fill="none" stroke="#333" stroke-width="1"/></svg>
<svg class="a" style="left:257px;top:552px;" width="9" height="13" viewBox="0 0 9 13"><path d="M1,1 L7.5,6.5 L1,12" fill="none" stroke="#333" stroke-width="1"/></svg>
<svg class="a" style="left:257px;top:581px;" width="9" height="13" viewBox="0 0 9 13"><path d="M1,1 L7.5,6.5 L1,12" fill="none" stroke="#333" stroke-width="1"/></svg>
<svg class="a" style="left:257px;top:639px;" width="9" height="13" viewBox="0 0 9 13"><path d="M1,1 L7.5,6.5 L1,12" fill="none" stroke="#333" stroke-width="1"/></svg>
<svg class="a" style="left:11px;top:426px;" width="16" height="16" viewBox="0 0 16 16"><g transform="scale(0.94)"><path d="M12,0.5 L16.5,2.5 V14.5 L12,16.5 L4.5,9.5 L1.8,11.8 L0.5,11 V6 L1.8,5.2 L4.5,7.5 Z" fill="#1f8ad2"/><path d="M12,4.5 V12.5 L7,8.5 Z" fill="#eeeeee"/><path d="M12,0.5 L16.5,2.5 V14.5 L12,16.5 Z" fill="#23a9f2"/></g></svg>
<svg class="a" style="left:11px;top:448px;" width="16" height="16" viewBox="0 0 16 16"><rect x="0" y="0" width="16" height="16" fill="#0f78d7"/><path d="M1.5,1.5 H14.5 V9 C14.5,11.5 11.5,14 8,15.5 C4.5,14 1.5,11.5 1.5,9 Z" fill="#fff"/><path d="M8,1 V16 M1,7.8 H15" stroke="#0f78d7" stroke-width="1.3"/></svg>
<svg class="a" style="left:11px;top:469px;" width="15" height="15" viewBox="0 0 15 15"><path d="M0.8,5.5 V13.6 H12.6 V11" fill="none" stroke="#222" stroke-width="1.1"/><path d="M3.2,10.8 C3.6,6.8 6.5,4.6 10.2,4.6 V2 L14.3,5.8 L10.2,9.4 V7 C7.2,7 5.2,8.4 3.2,10.8 Z" fill="none" stroke="#222" stroke-width="1"/></svg>
<svg class="a" style="left:11px;top:550px;" width="16" height="16" viewBox="0 0 16 16"><rect x="0" y="0" width="16" height="16" fill="#fff"/><path d="M4.3,1 L13,8 L4.3,15" fill="none" stroke="#555" stroke-width="2.3"/><circle cx="5.8" cy="8" r="1.9" fill="#1aa3f0"/></svg>
<svg class="a" style="left:10px;top:579px;" width="18" height="17" viewBox="0 0 18 17"><path d="M1,4.5 L5,7.5 M2,13.5 L5,11" stroke="#9a9a9a" stroke-width="1.6"/><ellipse cx="7" cy="6.5" rx="4.3" ry="4.5" fill="#b4cdf5"/><ellipse cx="7" cy="12.5" rx="3.5" ry="2" fill="#cfcfcf"/><circle cx="15.3" cy="3.5" r="1.5" fill="#1f4fa8"/><rect x="10.5" y="8.5" width="6.5" height="7.5" fill="#fff" stroke="#222" stroke-width="1.1"/><path d="M12,11 H15.5 M12,13 H15.5" stroke="#333" stroke-width="0.9"/></svg>
<svg class="a" style="left:120px;top:400px;" width="80" height="110" viewBox="0 0 80 110"><path d="M14.2,12 L14.2,81.6 L28,69.2 L38.5,66 L52.2,99 L58.2,96.2 L48,66 L66,55 Z" fill="#000"/><path d="M43.1,54.8 L43.1,25 A29.8,29.8 0 1 1 16.1,42.2 Z" fill="#fc5e44"/></svg>
<div class="a" style="left:0;top:1160px;width:1912px;height:40px;background:linear-gradient(to right,#1b1b1b 0,#1b1b1b 490px,#2c2a25 540px,#2d2b26 980px,#332e23 1070px,#342f23 1120px,#2c2b27 1210px,#30302c 1340px,#2d2d2a 1420px,#1f1f20 1450px,#1b1b1c 1490px,#1b1b1b 1912px)"></div>
<div class="a" style="left:0px;top:1160px;width:492px;height:40px;background:#1b1b1b;"></div>
<div class="a" style="left:492px;top:1160px;width:44px;height:40px;background:#4a4843;"></div>
<div class="a" style="left:536px;top:1160px;width:4px;height:40px;background:#353430;"></div>
<svg class="a" style="left:15px;top:1171px;" width="18" height="18" viewBox="0 0 18 18"><path d="M0.5,2.5 L7.5,1.5 V8.3 H0.5 Z M8.5,1.4 L17.3,0.2 V8.3 H8.5 Z M0.5,9.3 H7.5 V16.2 L0.5,15.3 Z M8.5,9.3 H17.3 V17.5 L8.5,16.3 Z" fill="#fff"/></svg>
<svg class="a" style="left:407px;top:1171px;" width="18" height="17" viewBox="0 0 18 17"><path d="M1.5,0.5 V2.8 H11.5 V0.5 M1.5,16.5 V14.2 H11.5 V16.5" fill="none" stroke="#fff" stroke-width="1"/><rect x="1.5" y="5.5" width="10" height="6" fill="none" stroke="#fff" stroke-width="1"/><path d="M15.5,0.5 V16.5" stroke="#fff" stroke-width="1.2"/><rect x="14" y="5" width="3" height="2.8" fill="#fff"/></svg>
<svg class="a" style="left:455px;top:1167px;" width="24" height="24" viewBox="0 0 24 24"><defs><radialGradient id="ffg" cx="0.6" cy="0.3" r="0.8"><stop offset="0" stop-color="#ffe14a"/><stop offset="0.5" stop-color="#ff8a1f"/><stop offset="1" stop-color="#f0236e"/></radialGradient></defs><path d="M12,23 C5.5,23 1,18.5 1,12.5 C1,9 2.5,6.5 4,5 C4,7 5,8 5.5,8.5 C6.5,6 8.5,4.5 10,4 C10.5,2 12,0.5 14,0 C13.5,2 14.5,3 16,4 C20,6 23,9 23,13 C23,18.5 18.5,23 12,23 Z" fill="url(#ffg)"/><circle cx="11.5" cy="12.5" r="5" fill="#8f3bd6"/><path d="M7,11 C8,8 11,7 14,8.5 C12,9 11,10 11,11.5 Z" fill="#ff9d2a"/><circle cx="10.5" cy="14" r="2.2" fill="#5b4fd8"/></svg>
<svg class="a" style="left:505px;top:1171px;" width="22" height="19" viewBox="0 0 22 19"><rect x="0" y="0" width="9.6" height="3" fill="#e9a626"/><rect x="0" y="1.5" width="21" height="16" fill="#fbd66e"/><path d="M0,3.5 H21" stroke="#f5c452" stroke-width="0.8"/><path d="M4,18 V10.4 H18 V18 H13.6 V13.4 H8.4 V18 Z" fill="#2b90e0"/></svg>
<svg class="a" style="left:553px;top:1168px;" width="24" height="24" viewBox="0 0 24 24"><rect x="0" y="0" width="24" height="24" rx="3" fill="#444444"/><path d="M6,13 L17.5,16.5 V12 L6,8.5 Z" fill="#c77400"/><path d="M6,8.5 L17.5,4.5 V9 L6,13 Z M6,15.5 L17.5,11.5 V16 L6,20 Z" fill="#ff9800"/></svg>
<svg class="a" style="left:600px;top:1166px;" width="28" height="28" viewBox="0 0 28 28"><path d="M19.9,2.1 L26,4.1 V23.6 L19.4,25.7 L2.1,20.5 V19.8 L19.9,21 Z M3,9.1 L4.4,8.2 L7.7,10.5 L13.1,5.8 L16.8,6.5 V17.7 L13.5,18.7 L7.7,14 L4.4,15.9 L3,14.9 Z M4.8,10.8 L6.4,12.2 L4.8,13.5 Z M10.7,12.1 L13.8,9.9 V14.3 Z" fill="#865fcf" fill-rule="evenodd"/></svg>
<svg class="a" style="left:651px;top:1168px;" width="24" height="24" viewBox="0 0 24 24"><rect x="0" y="0" width="24" height="24" fill="#fff"/><path d="M8.5,6.8 C10.5,5.3 14.5,5.2 16.2,7.6 C17.6,9.6 17.4,13.5 16.4,15.8 C15.6,17.6 14.2,18.6 12.6,18.2 C11.6,17.9 11,17 11.2,16 C9.2,15.6 7.2,14 6.9,11.4 C6.6,9.4 7.2,7.8 8.5,6.8 Z" fill="#14a82d"/><path d="M12.6,16.3 C13.4,15.8 14.4,16.4 14,17.2" fill="none" stroke="#fff" stroke-width="0.9"/><circle cx="14.6" cy="10.2" r="0.6" fill="#bfe8c5"/></svg>
<svg class="a" style="left:702px;top:1170px;" width="19" height="19" viewBox="0 0 19 19"><g transform="translate(9.5,9.5)"><circle r="5.9" fill="none" stroke="#fff" stroke-width="2.8"/><rect x="-1.7" y="-9.2" width="3.4" height="3.6" fill="#fff" transform="rotate(0)"/><rect x="-1.7" y="-9.2" width="3.4" height="3.6" fill="#fff" transform="rotate(45)"/><rect x="-1.7" y="-9.2" width="3.4" height="3.6" fill="#fff" transform="rotate(90)"/><rect x="-1.7" y="-9.2" width="3.4" height="3.6" fill="#fff" transform="rotate(135)"/><rect x="-1.7" y="-9.2" width="3.4" height="3.6" fill="#fff" transform="rotate(180)"/><rect x="-1.7" y="-9.2" width="3.4" height="3.6" fill="#fff" transform="rotate(225)"/><rect x="-1.7" y="-9.2" width="3.4" height="3.6" fill="#fff" transform="rotate(270)"/><rect x="-1.7" y="-9.2" width="3.4" height="3.6" fill="#fff" transform="rotate(315)"/></g></svg>
<svg class="a" style="left:749px;top:1167px;" width="24" height="25" viewBox="0 0 24 25"><g transform="translate(12,12.5) rotate(45)"><rect x="-8.5" y="-8.5" width="8" height="8" fill="#f07070"/><rect x="0.5" y="-8.5" width="8" height="8" fill="#7bc957"/><rect x="-8.5" y="0.5" width="8" height="8" fill="#6aaef0"/><rect x="0.5" y="0.5" width="8" height="8" fill="#f6d36b"/></g><path d="M9,3 L15,10 M12,7 V20 M12,10 L16,13" stroke="#222" stroke-width="1.6"/><circle cx="12" cy="20" r="1.8" fill="#222"/><circle cx="16" cy="13" r="1.8" fill="#222"/></svg>
<svg class="a" style="left:800px;top:1169px;" width="21" height="21" viewBox="0 0 21 21"><circle cx="10.5" cy="10.5" r="10.2" fill="#0a62d8"/><circle cx="10.5" cy="9" r="4" fill="none" stroke="#fff" stroke-width="2.4"/><rect x="9.3" y="11" width="2.4" height="5.5" fill="#fff"/></svg>
<svg class="a" style="left:847px;top:1168px;" width="24" height="24" viewBox="0 0 24 24"><ellipse cx="11" cy="10" rx="10" ry="6.5" fill="#f4f4f4" stroke="#d03030" stroke-width="1.1" transform="rotate(-25 11 10)"/><path d="M2.5,14 C5,17 10,16.5 14,14 L13,17 C9,19 5,18.5 2.5,15.5 Z" fill="#9a9a9a"/><path d="M11,4 L16,17 M17,8 L13,17" stroke="#777" stroke-width="0.8"/><circle cx="14" cy="19.5" r="2.2" fill="none" stroke="#2d88e0" stroke-width="1.3"/><circle cx="19.5" cy="18" r="2.2" fill="none" stroke="#2d88e0" stroke-width="1.3"/></svg>
<svg class="a" style="left:895px;top:1168px;" width="26" height="24" viewBox="0 0 26 24"><path d="M3,9 C2,11 3,13 5,13 C6,15 9,17 12,17 C17,17 20,13 20,9 C20,6 21,3 21.5,1 C19,2.5 17,4 15,4 C11,3.5 8,5 7,8 C5.5,7.5 4,8 3,9 Z" fill="#9a9a9a"/><circle cx="11" cy="9" r="2.2" fill="#fff" stroke="#333" stroke-width="0.8"/><circle cx="16" cy="8.5" r="2.2" fill="#fff" stroke="#333" stroke-width="0.8"/><path d="M12,14 L18,22" stroke="#bbb" stroke-width="1.8"/></svg>
<svg class="a" style="left:945px;top:1168px;" width="24" height="24" viewBox="0 0 24 24"><rect x="0" y="0" width="24" height="24" rx="3" fill="#239a63"/><circle cx="12" cy="12" r="6.2" fill="none" stroke="#fff" stroke-width="3.8"/></svg>
<div class="a" style="left:447px;top:1198px;width:30px;height:2px;background:#76b9ed;"></div>
<div class="a" style="left:492px;top:1198px;width:44px;height:2px;background:#76b9ed;"></div>
<div class="a" style="left:545px;top:1198px;width:33px;height:2px;background:#76b9ed;"></div>
<div class="a" style="left:594px;top:1198px;width:40px;height:2px;background:#76b9ed;"></div>
<div class="a" style="left:643px;top:1198px;width:40px;height:2px;background:#76b9ed;"></div>
<div class="a" style="left:692px;top:1198px;width:40px;height:2px;background:#76b9ed;"></div>
<div class="a" style="left:741px;top:1198px;width:31px;height:2px;background:#76b9ed;"></div>
<div class="a" style="left:790px;top:1198px;width:40px;height:2px;background:#76b9ed;"></div>
<div class="a" style="left:839px;top:1198px;width:40px;height:2px;background:#76b9ed;"></div>
<div class="a" style="left:888px;top:1198px;width:40px;height:2px;background:#76b9ed;"></div>
<div class="a" style="left:937px;top:1198px;width:40px;height:2px;background:#76b9ed;"></div>
<div class="a" style="left:477px;top:1198px;width:10px;height:2px;background:#4f87b5;"></div>
<div class="a" style="left:536px;top:1198px;width:4px;height:2px;background:#4f87b5;"></div>
<div class="a" style="left:578px;top:1198px;width:7px;height:2px;background:#4f87b5;"></div>
<div class="a" style="left:772px;top:1198px;width:9px;height:2px;background:#4f87b5;"></div>
<svg class="a" style="left:1730px;top:1176px;" width="14" height="8" viewBox="0 0 14 8"><path d="M1,7 L7,1 L13,7" fill="none" stroke="#fff" stroke-width="1.2"/></svg>
<svg class="a" style="left:1752px;top:1172px;" width="18" height="16" viewBox="0 0 18 16"><path d="M1.5,5 H4.5 L9,1.5 V14.5 L4.5,11 H1.5 Z" fill="none" stroke="#fff" stroke-width="1.1"/><path d="M11.5,5.5 C12.5,6.5 12.5,9.5 11.5,10.5 M13.5,3.5 C15.5,5.5 15.5,10.5 13.5,12.5 M15.5,1.5 C18.5,4.5 18.5,11.5 15.5,14.5" fill="none" stroke="#fff" stroke-width="1"/></svg>
<svg class="a" style="left:1776px;top:1172px;" width="18" height="17" viewBox="0 0 18 17"><g transform="rotate(90 8.5 8.5)"><path d="M8.5,1 C9.5,1 10,2 10,3 V6.5 L16.5,9 V11 L10,9.5 V13 L12,14.5 V16 L8.5,15 L5,16 V14.5 L7,13 V9.5 L0.5,11 V9 L7,6.5 V3 C7,2 7.5,1 8.5,1 Z" fill="none" stroke="#fff" stroke-width="1.1"/></g></svg>
<svg class="a" style="left:1800px;top:1173px;" width="18" height="14" viewBox="0 0 18 14"><path d="M2,1 V3.5 M4.5,1 V3.5 M1,3.5 H5.5 V5.5 C5.5,7 4.5,7.5 3.2,7.5 C2,7.5 1,7 1,5.5 Z M3.2,7.5 V13" fill="none" stroke="#fff" stroke-width="1"/><rect x="6" y="3.5" width="10.5" height="8" fill="none" stroke="#fff" stroke-width="1"/><rect x="16.5" y="5.5" width="1.3" height="4" fill="#fff"/><rect x="7" y="4.5" width="8.5" height="6" fill="#fff"/></svg>
<svg class="a" style="left:1825px;top:1172px;" width="15" height="15" viewBox="0 0 15 15"><rect x="1.5" y="1.5" width="2" height="8" fill="#fff"/><rect x="1.5" y="11" width="2" height="2" fill="#fff"/><circle cx="7.2" cy="12" r="1.6" fill="#fff"/><circle cx="11.8" cy="12" r="1.6" fill="#fff"/></svg>
<div class="t" style="left:1865.8px;top:1163.84px;color:#fff;letter-spacing:-0.700px;">16:00</div>
<div class="t" style="left:1850.8px;top:1181.84px;color:#fff;letter-spacing:-0.089px;">25/11/2019</div>
</body></html>
